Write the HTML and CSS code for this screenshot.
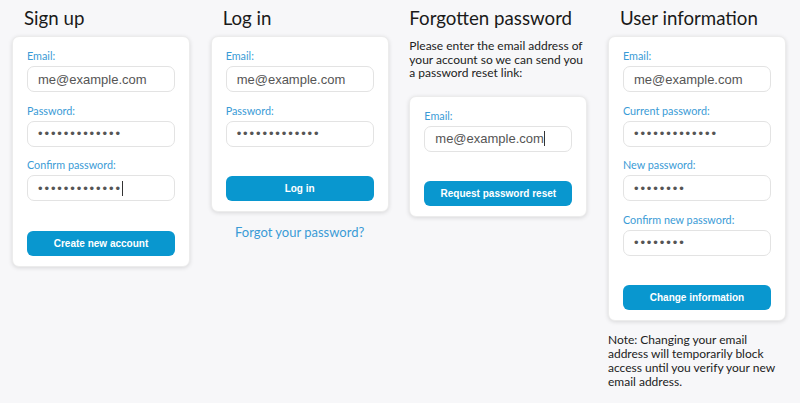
FILE: index.html
```html
<!DOCTYPE html>
<html lang="en">
<head>
<meta charset="utf-8">
<title>Account forms</title>
<link rel="stylesheet" href="styles.css">
</head>
<body>
<main class="grid">
  <section class="col">
    <h1 class="title">Sign up</h1>
    <div class="card">
      <div class="field"><label class="label">Email:</label><div class="input">me@example.com</div></div>
      <div class="field"><label class="label">Password:</label><div class="input pw">•••••••••••••</div></div>
      <div class="field"><label class="label">Confirm password:</label><div class="input pw">•••••••••••••<span class="caret"></span></div></div>
      <button class="btn">Create new account</button>
    </div>
  </section>
  <section class="col">
    <h1 class="title">Log in</h1>
    <div class="card">
      <div class="field"><label class="label">Email:</label><div class="input">me@example.com</div></div>
      <div class="field"><label class="label">Password:</label><div class="input pw">•••••••••••••</div></div>
      <button class="btn">Log in</button>
    </div>
    <a class="link" href="#">Forgot your password?</a>
  </section>
  <section class="col">
    <h1 class="title flush">Forgotten password</h1>
    <p class="intro">Please enter the email address of your account so we can send you a password reset link:</p>
    <div class="card">
      <div class="field"><label class="label">Email:</label><div class="input">me@example.com<span class="caret"></span></div></div>
      <button class="btn">Request password reset</button>
    </div>
  </section>
  <section class="col">
    <h1 class="title">User information</h1>
    <div class="card">
      <div class="field"><label class="label">Email:</label><div class="input">me@example.com</div></div>
      <div class="field"><label class="label">Current password:</label><div class="input pw">•••••••••••••</div></div>
      <div class="field"><label class="label">New password:</label><div class="input pw">••••••••</div></div>
      <div class="field"><label class="label">Confirm new password:</label><div class="input pw">••••••••</div></div>
      <button class="btn">Change information</button>
    </div>
    <p class="note">Note: Changing your email address will temporarily block access until you verify your new email address.</p>
  </section>
</main>
</body>
</html>
```

FILE: styles.css
```css
* { box-sizing: border-box; }
html, body { margin: 0; padding: 0; }
body {
  background: #f7f7f9;
  font-family: Lato, "Open Sans", sans-serif;
  color: #222;
  width: 800px;
  height: 403px;
  overflow: hidden;
}
.grid {
  display: grid;
  grid-template-columns: repeat(4, 178px);
  column-gap: 20.67px;
  padding: 0 12px;
}
.col { display: flex; flex-direction: column; }
.title {
  font-size: 18.7px;
  font-weight: 400;
  line-height: 24px;
  margin: 6px 0 6px 12px;
  color: #1a1a1a;
}
.title.flush { margin-left: 0; }
.card {
  background: #fff;
  border-radius: 7px;
  box-shadow: 0 1px 4px rgba(0,0,0,0.13);
  border: 1px solid #ececec;
  padding: 12px 14px 10px 14px;
  display: flex;
  flex-direction: column;
}
.field { display: flex; flex-direction: column; margin-bottom: 11.6px; }
.label {
  font-size: 10.8px;
  line-height: 14px;
  color: #3a9bd6;
  margin-bottom: 3px;
}
.input {
  height: 26px;
  border: 1px solid #e3e3e3;
  border-radius: 7px;
  padding: 0 10px;
  font-family: "Liberation Sans", Arial, sans-serif;
  font-size: 13px;
  color: #555;
  display: flex;
  align-items: center;
  white-space: nowrap;
}
.input.pw { letter-spacing: 1.9px; }
.caret {
  display: inline-block;
  width: 1px;
  height: 15px;
  background: #333;
  margin-left: 0;
}
.btn {
  margin-top: 18px;
  height: 25px;
  border: none;
  border-radius: 6px;
  background: #0997cf;
  color: #fff;
  font-family: "Liberation Sans", Arial, sans-serif;
  font-weight: 700;
  font-size: 10px;
  padding: 0;
}
.link {
  margin-top: 12px;
  text-align: center;
  font-size: 13px;
  line-height: 16px;
  color: #3a9bd6;
  text-decoration: none;
}
.intro {
  margin: 3px 0 16px 0;
  font-size: 12px;
  line-height: 13.5px;
}
.note {
  margin: 12px 0 0 0;
  font-size: 12px;
  line-height: 14px;
}
```
